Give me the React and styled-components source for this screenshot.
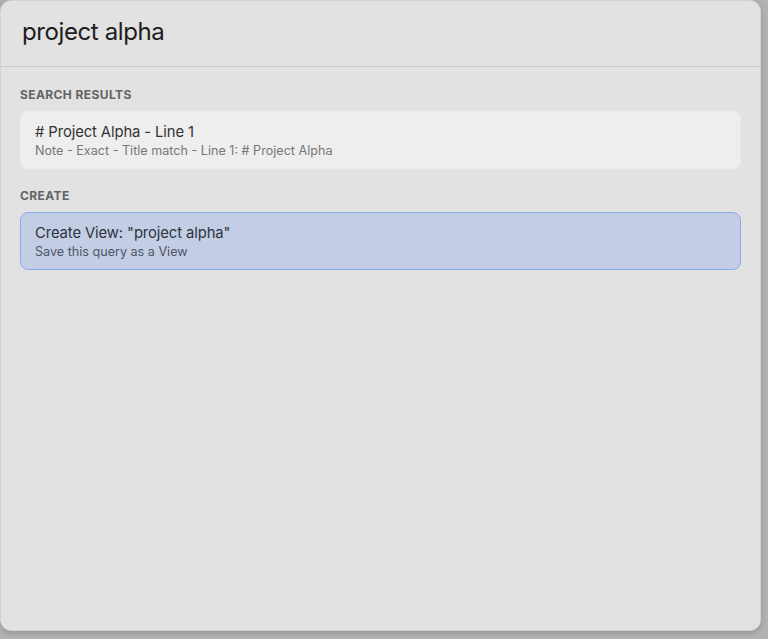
import React from 'react';
import styled, { createGlobalStyle } from 'styled-components';

const GlobalStyle = createGlobalStyle`
  html, body {
    margin: 0;
    padding: 0;
    background: #b3b3b3;
  }
  body {
    font-family: Inter, "Noto Sans", "Liberation Sans", sans-serif;
    -webkit-font-smoothing: antialiased;
  }
`;

const Stage = styled.div`
  width: 768px;
  height: 639px;
  background: #b3b3b3;
  overflow: hidden;
`;

const Panel = styled.div`
  width: 761px;
  height: 631px;
  box-sizing: border-box;
  background: #e1e2e1;
  border: 1px solid #d2d2d2;
  border-radius: 11px;
  box-shadow: 0 2px 6px rgba(0, 0, 0, 0.18);
  display: flex;
  flex-direction: column;
  overflow: hidden;
`;

const SearchBar = styled.div`
  height: 65px;
  flex-shrink: 0;
  display: flex;
  align-items: center;
  padding: 0 21px;
  border-bottom: 1px solid #c8c9c8;
`;

const Query = styled.div`
  font-size: 24px;
  color: #1d1d1d;
  letter-spacing: -0.4px;
  padding-bottom: 4px;
`;

const Results = styled.div`
  display: flex;
  flex-direction: column;
  padding: 20px 19px 0;
`;

const SectionTitle = styled.div`
  font-size: 12px;
  font-weight: 700;
  letter-spacing: 0.4px;
  color: #646464;
  line-height: 15px;
  margin-bottom: 9px;
`;

const Item = styled.div`
  box-sizing: border-box;
  height: 58px;
  padding: 11px 14px 0;
  border-radius: 8px;
  background: ${(p) => (p.selected ? '#c3cee5' : '#eeeeee')};
  border: 1px solid ${(p) => (p.selected ? '#86aaf0' : '#eaeaea')};
  margin-bottom: 19px;
`;

const ItemTitle = styled.div`
  font-size: 14.8px;
  line-height: 19px;
  letter-spacing: -0.1px;
  color: ${(p) => (p.selected ? '#2f3440' : '#333333')};
`;

const ItemMeta = styled.div`
  font-size: 12.6px;
  line-height: 17px;
  margin-top: 0;
  color: ${(p) => (p.selected ? '#4e5566' : '#777777')};
`;

const sections = [
  {
    title: 'SEARCH RESULTS',
    items: [
      {
        title: '# Project Alpha - Line 1',
        meta: 'Note - Exact - Title match - Line 1: # Project Alpha',
      },
    ],
  },
  {
    title: 'CREATE',
    items: [
      {
        title: 'Create View: "project alpha"',
        meta: 'Save this query as a View',
        selected: true,
      },
    ],
  },
];

export default function App() {
  return (
    <Stage>
      <GlobalStyle />
      <Panel>
        <SearchBar>
          <Query>project alpha</Query>
        </SearchBar>
        <Results>
          {sections.map((section) => (
            <div key={section.title}>
              <SectionTitle>{section.title}</SectionTitle>
              {section.items.map((item) => (
                <Item key={item.title} selected={item.selected}>
                  <ItemTitle selected={item.selected}>{item.title}</ItemTitle>
                  <ItemMeta selected={item.selected}>{item.meta}</ItemMeta>
                </Item>
              ))}
            </div>
          ))}
        </Results>
      </Panel>
    </Stage>
  );
}
